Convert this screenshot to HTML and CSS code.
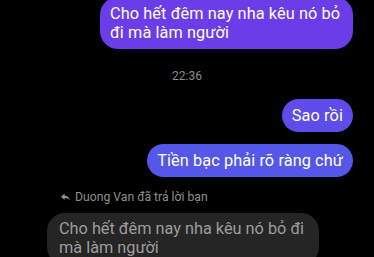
FILE: index.html
```html
<!DOCTYPE html>
<html lang="vi">
<head>
  <meta charset="UTF-8" />
  <meta name="viewport" content="width=device-width, initial-scale=1.0"/>
  <title>Tin nhắn</title>
  <link rel="stylesheet" href="styles.css">
</head>
<body>

  <div class="chat">

    <!-- Tin nhắn đã gửi -->
    <div class="row out">
      <div class="bubble first">Cho hết đêm nay nha kêu nó bỏ đi mà làm người</div>
    </div>

    <div class="time">22:36</div>

    <div class="row out">
      <div class="bubble mid">Sao rồi</div>
    </div>
    <div class="row out">
      <div class="bubble last">Tiền bạc phải rõ ràng chứ</div>
    </div>

    <!-- Trả lời -->
    <div class="reply">
      <div class="reply-label">
        <svg width="9" height="8" viewBox="0 0 10 8"><path d="M4 0 L0 3.6 L4 7.2 V5 C6.5 5 8.3 5.8 10 7.8 C9.3 4.8 7.6 2.6 4 2.2 Z" fill="#8f8f8f"/></svg>
        <span>Duong Van đã trả lời bạn</span>
      </div>
      <div class="quote">Cho hết đêm nay nha kêu nó bỏ đi mà làm người</div>
    </div>

  </div>

</body>
</html>
```

FILE: styles.css
```css
body {
  margin: 0;
  background-color: #000;
  font-family: Roboto, 'Noto Sans', sans-serif;
  overflow: hidden;
}

.chat {
  display: flex;
  flex-direction: column;
  margin-top: -3px;
}

.row {
  display: flex;
}

.row.out {
  justify-content: flex-end;
  padding-right: 21px;
}

.bubble {
  max-width: 233px;
  padding: 7px 10px;
  border-radius: 18px;
  color: #fff;
  font-size: 16.3px;
  line-height: 19px;
  letter-spacing: 0.1px;
}

.bubble.first {
  background-color: #6b3de9;
}

.bubble.mid {
  background-color: #5d4ce9;
}

.bubble.last {
  margin-top: 12px;
  background-color: #5457e8;
}

.time {
  text-align: center;
  color: #8c8c8c;
  font-size: 12px;
  line-height: 14px;
  margin: 20px 0 16px;
}

.reply {
  margin-top: 12px;
  padding-left: 47px;
}

.reply-label {
  display: flex;
  align-items: center;
  gap: 5px;
  padding-left: 14px;
  color: #8f8f8f;
  font-size: 12.2px;
  line-height: 16px;
}

.quote {
  width: 248px;
  margin-top: 8px;
  padding: 6px 12px 8px;
  border-radius: 18px;
  background-color: #252525;
  color: #9d9d9d;
  font-size: 16.3px;
  line-height: 19px;
}
```
